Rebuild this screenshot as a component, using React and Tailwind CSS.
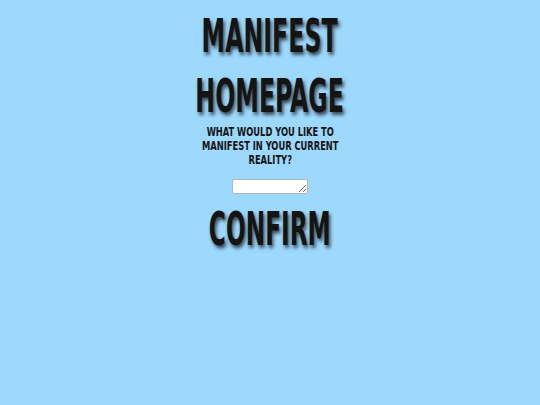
import React, { useState } from 'react';

export default function App() {
  const [wish, setWish] = useState('');

  const headingFont = { fontFamily: '"DejaVu Sans Condensed", "DejaVu Sans", sans-serif' };

  return (
    <div className="min-h-[405px] w-full bg-[#9dd8fd] flex flex-col items-center pt-[6px]" style={headingFont}>
      {/* Title */}
      <h1 className="text-[47px] leading-[60px] font-bold text-[#141414] text-center scale-x-[0.56] whitespace-nowrap [text-shadow:3px_3px_5px_rgba(0,0,0,0.65)]">
        MANIFEST
        <br />
        HOMEPAGE
      </h1>

      {/* Question */}
      <p className="mt-[-1px] text-[12.5px] leading-[14px] font-bold text-[#141414] text-center scale-x-[0.74] whitespace-nowrap">
        WHAT WOULD YOU LIKE TO
        <br />
        MANIFEST IN YOUR CURRENT
        <br />
        REALITY?
      </p>

      <textarea
        value={wish}
        onChange={(e) => setWish(e.target.value)}
        className="mt-[12px] w-[76px] h-[15px] bg-white border border-[#b5b5b5] rounded-[2px] text-[10px] leading-[12px] p-0 block"
      />

      <button className="mt-[5px] text-[47px] leading-[60px] font-bold text-[#141414] scale-x-[0.55] whitespace-nowrap [text-shadow:3px_3px_5px_rgba(0,0,0,0.65)] bg-transparent">
        CONFIRM
      </button>
    </div>
  );
}
